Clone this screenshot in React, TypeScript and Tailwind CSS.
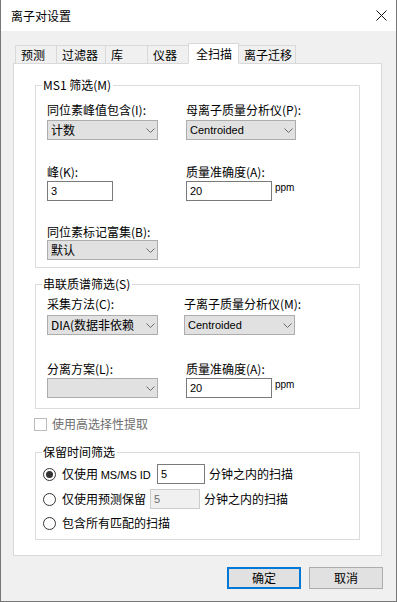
import React from "react";

const Chevron = () => (
  <svg width="9" height="5" viewBox="0 0 9 5" className="shrink-0">
    <path d="M0.5 0.5 L4.5 4.5 L8.5 0.5" fill="none" stroke="#6a6a6a" strokeWidth="1" />
  </svg>
);

const Select = ({ value, width, latin }: { value: string; width: string; latin?: boolean }) => (
  <div className={`${width} h-[20px] bg-[#e1e1e1] border border-[#adadad] flex items-center pl-[3px] pr-[2px]`}>
    <span
      className={`flex-1 min-w-0 overflow-hidden whitespace-nowrap ${
        latin ? "font-['Liberation_Sans'] text-[11px]" : ""
      }`}
    >
      {value}
    </span>
    <Chevron />
  </div>
);

const Input = ({ value, width, disabled }: { value: string; width: string; disabled?: boolean }) => (
  <div
    className={`${width} h-[20px] border flex items-center pl-[3px] font-['Liberation_Sans'] text-[11px] ${
      disabled ? "bg-[#f0f0f0] border-[#cccccc] text-[#6d6d6d]" : "bg-white border-[#7a7a7a] text-black"
    }`}
  >
    {value}
  </div>
);

const Radio = ({ checked }: { checked?: boolean }) => (
  <div className="w-[13px] h-[13px] rounded-full border border-[#333333] bg-white flex items-center justify-center shrink-0">
    {checked && <div className="w-[7px] h-[7px] rounded-full bg-[#333333]" />}
  </div>
);

const Group = ({ title, children, className }: { title: string; children: React.ReactNode; className?: string }) => (
  <fieldset className={`border border-[#dcdcdc] ${className ?? ""}`}>
    <legend className="ml-[6px] pl-px pr-[2px] leading-[16px]">{title}</legend>
    {children}
  </fieldset>
);

const tabs = [
  { label: "预测", w: "w-[42px]" },
  { label: "过滤器", w: "w-[50px]" },
  { label: "库", w: "w-[43px]" },
  { label: "仪器", w: "w-[42px]" },
  { label: "全扫描", w: "w-[51px]", active: true },
  { label: "离子迁移", w: "w-[58px]" },
];

export default function App() {
  return (
    <div className="w-[397px] h-[602px] bg-[#f0f0f0] border-x border-b border-[#777777] flex flex-col text-[12px] leading-[16px] text-black font-['Noto_Sans_CJK_SC',sans-serif]">
      {/* title bar */}
      <div className="h-[31px] bg-white flex items-center justify-between pl-[10px] pr-[9px] shrink-0">
        <span>离子对设置</span>
        <svg width="11" height="11" viewBox="0 0 11 11">
          <path d="M0.5 0.5 L10.5 10.5 M10.5 0.5 L0.5 10.5" stroke="#111" strokeWidth="1" />
        </svg>
      </div>

      <div className="pl-[12px] pr-[14px] pt-[12px] flex flex-col">
        {/* tabs */}
        <div className="flex items-end h-[21px] ml-[2px] -mb-px relative z-10">
          {tabs.map((t, i) => (
            <div
              key={t.label}
              className={`${t.w} ${i > 0 ? "-ml-px" : ""} border border-[#d9d9d9] flex items-center ${
                t.active
                  ? "h-[21px] bg-white border-b-white pl-[7px] relative z-10"
                  : "h-[19px] bg-[#f0f0f0] pl-[5px]"
              }`}
            >
              {t.label}
            </div>
          ))}
        </div>

        {/* panel */}
        <div className="bg-white border border-[#d9d9d9] px-[21px] pt-[13px] pb-[15px] flex flex-col">
          <Group title="MS1 筛选(M)">
            <div className="pl-[11px] pt-[9px] pb-[7px] flex flex-col">
              <div className="flex">
                <div className="w-[139px]">
                  <div>同位素峰值包含(I):</div>
                  <div className="mt-[2px]">
                    <Select value="计数" width="w-[111px]" />
                  </div>
                </div>
                <div>
                  <div>母离子质量分析仪(P):</div>
                  <div className="mt-[2px]">
                    <Select value="Centroided" width="w-[110px]" latin />
                  </div>
                </div>
              </div>
              <div className="flex mt-[24px]">
                <div className="w-[139px]">
                  <div>峰(K):</div>
                  <div className="mt-px">
                    <Input value="3" width="w-[66px]" />
                  </div>
                </div>
                <div>
                  <div>质量准确度(A):</div>
                  <div className="mt-px flex items-start">
                    <Input value="20" width="w-[86px]" />
                    <span className="ml-[3px] font-['Liberation_Sans'] text-[10px] leading-[14px]">ppm</span>
                  </div>
                </div>
              </div>
              <div className="mt-[23px]">
                <div>同位素标记富集(B):</div>
                <Select value="默认" width="w-[111px]" />
              </div>
            </div>
          </Group>

          <Group title="串联质谱筛选(S)" className="mt-[8px]">
            <div className="pl-[11px] pt-[4px] pb-[10px] flex flex-col">
              <div className="flex">
                <div className="w-[137px]">
                  <div>采集方法(C):</div>
                  <div className="mt-[3px]">
                    <Select value="DIA(数据非依赖" width="w-[111px]" />
                  </div>
                </div>
                <div>
                  <div>子离子质量分析仪(M):</div>
                  <div className="mt-[3px]">
                    <Select value="Centroided" width="w-[111px]" latin />
                  </div>
                </div>
              </div>
              <div className="flex mt-[26px]">
                <div className="w-[139px]">
                  <div>分离方案(L):</div>
                  <div className="mt-px">
                    <Select value="" width="w-[111px]" />
                  </div>
                </div>
                <div>
                  <div>质量准确度(A):</div>
                  <div className="mt-px flex items-start">
                    <Input value="20" width="w-[86px]" />
                    <span className="ml-[3px] font-['Liberation_Sans'] text-[10px] leading-[14px]">ppm</span>
                  </div>
                </div>
              </div>
            </div>
          </Group>

          {/* disabled checkbox */}
          <div className="flex items-center h-[16px] mt-[7px] -ml-px text-[#6d6d6d]">
            <div className="w-[13px] h-[13px] border border-[#bcbcbc] bg-white shrink-0" />
            <span className="ml-[5px]">使用高选择性提取</span>
          </div>

          <Group title="保留时间筛选" className="mt-[12px]">
            <div className="pl-[7px] pt-[4px] pb-[6px] flex flex-col">
              <div className="flex items-center h-[20px]">
                <Radio checked />
                <span className="ml-[6px] w-[95px] whitespace-nowrap">
                  仅使用 <span className="font-['Liberation_Sans'] text-[11px]">MS/MS ID</span>
                </span>
                <Input value="5" width="w-[48px]" />
                <span className="ml-[4px]">分钟之内的扫描</span>
              </div>
              <div className="flex items-center h-[20px] mt-[5px]">
                <Radio />
                <span className="ml-[6px] w-[88px] whitespace-nowrap">仅使用预测保留</span>
                <Input value="5" width="w-[50px]" disabled />
                <span className="ml-[4px]">分钟之内的扫描</span>
              </div>
              <div className="flex items-center h-[20px] mt-[4px]">
                <Radio />
                <span className="ml-[6px]">包含所有匹配的扫描</span>
              </div>
            </div>
          </Group>
        </div>

        {/* buttons */}
        <div className="flex justify-end gap-[8px] mt-[11px] -mr-px">
          <button className="w-[74px] h-[22px] border-2 border-[#0078d7] bg-[#e1e1e1] flex items-center justify-center">
            确定
          </button>
          <button className="w-[74px] h-[22px] border border-[#adadad] bg-[#e1e1e1] flex items-center justify-center">
            取消
          </button>
        </div>
      </div>
    </div>
  );
}
